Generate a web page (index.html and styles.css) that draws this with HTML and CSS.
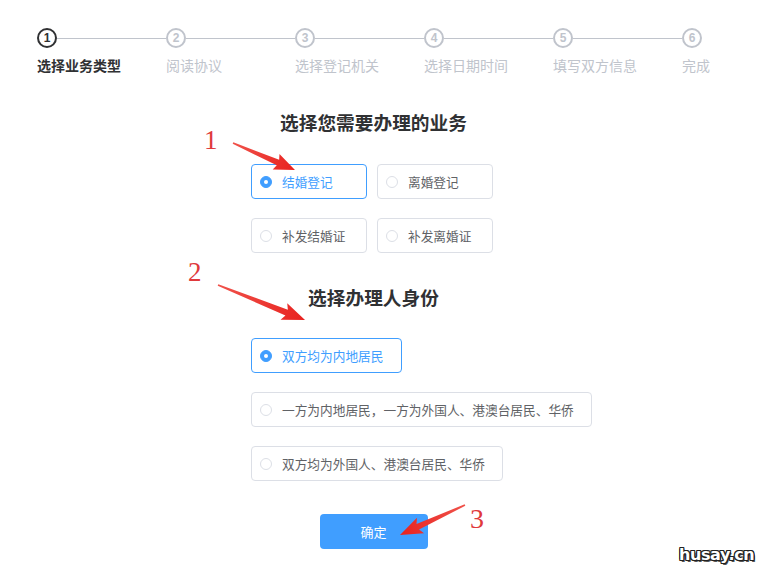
FILE: index.html
```html
<!DOCTYPE html>
<html lang="zh-CN">
<head>
<meta charset="utf-8">
<title>选择业务类型</title>
<link rel="stylesheet" href="styles.css">
</head>
<body>
<div class="page">
  <ol class="steps">
    <li class="step active"><div class="step-head"><span class="dot">1</span><span class="line"></span></div><div class="step-label">选择业务类型</div></li>
    <li class="step"><div class="step-head"><span class="dot">2</span><span class="line"></span></div><div class="step-label">阅读协议</div></li>
    <li class="step"><div class="step-head"><span class="dot">3</span><span class="line"></span></div><div class="step-label">选择登记机关</div></li>
    <li class="step"><div class="step-head"><span class="dot">4</span><span class="line"></span></div><div class="step-label">选择日期时间</div></li>
    <li class="step"><div class="step-head"><span class="dot">5</span><span class="line"></span></div><div class="step-label">填写双方信息</div></li>
    <li class="step last"><div class="step-head"><span class="dot">6</span></div><div class="step-label">完成</div></li>
  </ol>

  <main class="form">
    <h2 class="title">选择您需要办理的业务</h2>
    <div class="grid">
      <label class="option checked"><span class="radio"></span>结婚登记</label>
      <label class="option"><span class="radio"></span>离婚登记</label>
      <label class="option"><span class="radio"></span>补发结婚证</label>
      <label class="option"><span class="radio"></span>补发离婚证</label>
    </div>
    <h2 class="title title-2">选择办理人身份</h2>
    <div class="list">
      <label class="option checked"><span class="radio"></span>双方均为内地居民</label>
      <label class="option"><span class="radio"></span>一方为内地居民，一方为外国人、港澳台居民、华侨</label>
      <label class="option"><span class="radio"></span>双方均为外国人、港澳台居民、华侨</label>
    </div>
    <button class="btn" type="button">确定</button>
  </main>

  <svg class="annotations" width="771" height="576" viewBox="0 0 771 576">
    <defs>
      <linearGradient id="ag" x1="0" y1="0" x2="1" y2="0">
        <stop offset="0" stop-color="#f0524a"/>
        <stop offset="1" stop-color="#e8221f"/>
      </linearGradient>
    </defs>
    <text class="anno-num" x="204" y="149" font-size="27">1</text>
    <g transform="translate(233,143) rotate(23.5)">
      <polygon fill="url(#ag)" points="0,-0.8 49,-3 47,-8.5 67.6,0 47,8.5 49,3 0,0.8"/>
    </g>
    <text class="anno-num" x="188" y="281" font-size="27">2</text>
    <g transform="translate(218,285) rotate(21.9)">
      <polygon fill="url(#ag)" points="0,-0.8 74,-3.2 71,-9 93.8,0 71,9 74,3.2 0,0.8"/>
    </g>
    <text class="anno-num" x="470" y="528" font-size="28">3</text>
    <g transform="translate(465,505) rotate(155.2)">
      <polygon fill="url(#ag)" points="0,-0.8 52,-3 49,-8.5 71.6,0 49,8.5 52,3 0,0.8"/>
    </g>
  </svg>

  <div class="watermark">husay.cn</div>
</div>
</body>
</html>
```
FILE: styles.css
```css
* { box-sizing: border-box; }

html, body {
  margin: 0;
  padding: 0;
  background: #ffffff;
}

body {
  font-family: "Noto Sans CJK SC", "Noto Sans", "Liberation Sans", sans-serif;
  color: #303133;
}

.page {
  position: relative;
  width: 771px;
  height: 576px;
  overflow: hidden;
}

/* steps */
.steps {
  list-style: none;
  margin: 0;
  padding: 28px 0 0 37px;
  display: flex;
}

.step {
  width: 129px;
  flex: none;
}

.step.last {
  width: auto;
}

.step-head {
  display: flex;
  align-items: center;
  height: 20px;
}

.dot {
  flex: none;
  width: 20px;
  height: 20px;
  border: 2px solid #c0c4cc;
  border-radius: 50%;
  color: #c0c4cc;
  font-size: 12px;
  font-weight: 700;
  line-height: 16px;
  text-align: center;
  font-family: "Liberation Sans", "Noto Sans", sans-serif;
}

.line {
  flex: 1;
  height: 1px;
  background: #c0c4cc;
}

.step-label {
  margin-top: 7px;
  font-size: 14px;
  line-height: 20px;
  color: #c0c4cc;
  white-space: nowrap;
}

.step.active .dot {
  border-color: #303133;
  color: #303133;
}

.step.active .step-label {
  color: #303133;
  font-weight: 700;
}

/* form */
.form {
  margin-left: 251px;
  width: 245px;
  display: flex;
  flex-direction: column;
}

.title {
  margin: 35px 0 30px;
  font-size: 18.7px;
  line-height: 24px;
  font-weight: 700;
  text-align: center;
  color: #303133;
  white-space: nowrap;
}

.title-2 {
  margin: 32px 0 29px;
}

.grid {
  display: grid;
  grid-template-columns: 116px 116px;
  gap: 19px 10px;
}

.list {
  display: flex;
  flex-direction: column;
  align-items: flex-start;
  gap: 19px;
}

.option {
  display: flex;
  align-items: center;
  height: 35px;
  padding: 0 17px 0 8px;
  border: 1px solid #dcdfe6;
  border-radius: 4px;
  font-size: 12.7px;
  color: #606266;
  white-space: nowrap;
  width: max-content;
}

.grid .option {
  width: 116px;
}

.radio {
  flex: none;
  width: 12px;
  height: 12px;
  margin-right: 10px;
  border: 1px solid #dcdfe6;
  border-radius: 50%;
  background: #fff;
  position: relative;
}

.option.checked {
  border-color: #409eff;
  color: #409eff;
}

.option.checked .radio {
  border-color: #409eff;
  background: #409eff;
}

.option.checked .radio::after {
  content: "";
  position: absolute;
  left: 3px;
  top: 3px;
  width: 4px;
  height: 4px;
  border-radius: 50%;
  background: #fff;
}

.btn {
  align-self: center;
  margin-top: 33px;
  width: 108px;
  height: 35px;
  border: none;
  border-radius: 4px;
  background: #409eff;
  color: #fff;
  font-family: inherit;
  font-size: 13px;
  padding: 0;
}

/* annotations overlay */
.annotations {
  position: absolute;
  left: 0;
  top: 0;
  pointer-events: none;
}

.anno-num {
  fill: #e0393b;
  font-family: "Liberation Serif", "DejaVu Serif", serif;
}

.watermark {
  position: absolute;
  left: 679px;
  top: 544px;
  font-family: "DejaVu Sans", "Liberation Sans", sans-serif;
  font-weight: 700;
  font-size: 16px;
  letter-spacing: -0.4px;
  line-height: 22px;
  color: #ffffff;
  text-shadow:
    1px 0 0 #222, -1px 0 0 #222, 0 1px 0 #222, 0 -1px 0 #222,
    1px 1px 0 #222, -1px -1px 0 #222, 1px -1px 0 #222, -1px 1px 0 #222,
    1.5px 1.5px 0 #555;
}
```
